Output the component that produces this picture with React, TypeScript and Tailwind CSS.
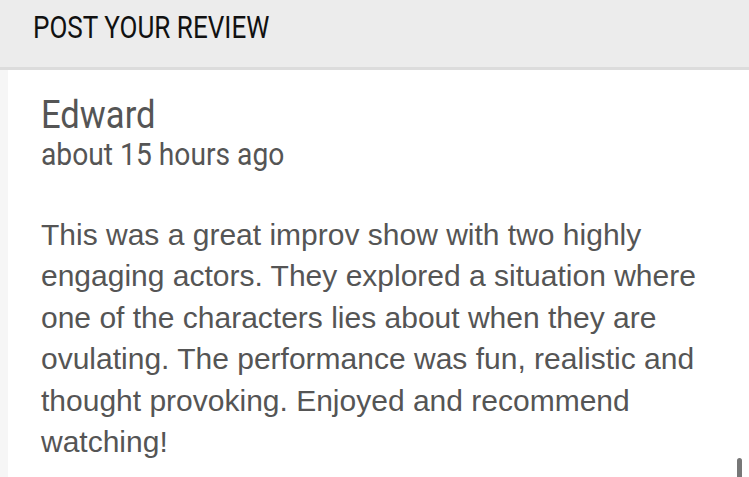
export default function App() {
  return (
    <div className="w-[749px] h-[477px] overflow-hidden bg-white relative flex flex-col">
      <header className="h-[70px] shrink-0 bg-[#ececec] border-b-[3px] border-[#dcdcdc] flex items-start pt-[12px] pl-[33px]">
        <h1
          className="text-[31px] leading-[31px] text-[#111] origin-left scale-x-[0.84] whitespace-nowrap"
          style={{ fontFamily: 'Roboto, sans-serif' }}
        >
          POST YOUR REVIEW
        </h1>
      </header>
      <div className="flex-1 flex">
        <div className="w-[8px] bg-[#f6f6f6]" />
        <div className="flex-1 pl-[33px] pt-[24px]">
          <div className="origin-left scale-x-[0.91] text-[#555]" style={{ fontFamily: 'Roboto, sans-serif' }}>
            <div className="text-[38px] leading-[42px]">Edward</div>
            <div className="text-[31px] leading-[38px]">about 15 hours ago</div>
          </div>
          <p
            className="mt-[40px] text-[30px] leading-[41.4px] text-[#555] w-[690px]"
            style={{ fontFamily: '"Liberation Sans", Arial, sans-serif' }}
          >
            This was a great improv show with two highly engaging actors. They explored a situation where one of the
            characters lies about when they are ovulating. The performance was fun, realistic and thought provoking.
            Enjoyed and recommend watching!
          </p>
        </div>
      </div>
      <div className="absolute right-[7px] bottom-0 w-[5px] h-[19px] rounded-t-full bg-[#777]" />
    </div>
  );
}
